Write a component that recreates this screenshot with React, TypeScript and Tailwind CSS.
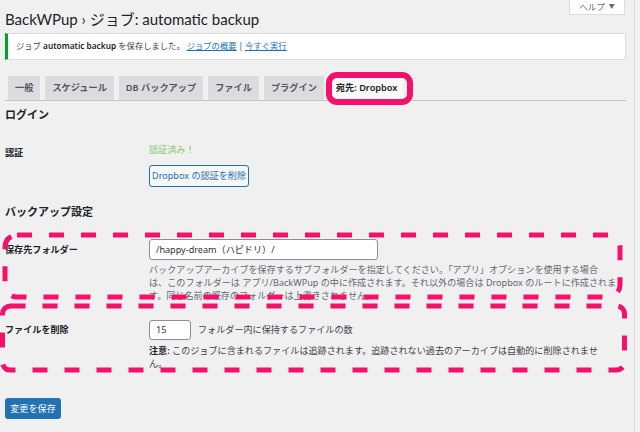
const tabs = ['一般', 'スケジュール', 'DB バックアップ', 'ファイル', 'プラグイン'];

export default function App() {
  return (
    <div className="relative w-[640px] h-[432px] overflow-hidden bg-[#f0f0f1] font-['Noto_Sans','Noto_Sans_CJK_JP',sans-serif] text-[#1d2327]">
      <div className="w-[635px] h-full border-r border-[#dcdcde] pl-[5px] pr-[8px]">
        {/* header */}
        <div className="flex items-start justify-between h-[33px]">
          <h1 className="pt-[8px] font-['Lato','Noto_Sans_CJK_JP',sans-serif] text-[15px] leading-[22px] text-[#1d2327]">BackWPup › ジョブ: automatic backup</h1>
          <div className="mr-[1px] flex h-[15px] w-[56px] items-start justify-center gap-[4px] border border-t-0 border-[#dcdcde] bg-white pt-[1px] text-[8.5px] leading-[11px] text-[#646970]">
            <span>ヘルプ</span>
            <span className="text-[6px] leading-[11px]">▼</span>
          </div>
        </div>

        {/* notice */}
        <div className="flex h-[27px] items-center border border-l-[3px] border-[#dcdcde] border-l-[#00a32a] bg-white pl-[8px] text-[8.3px] text-[#3c434a]">
          <span>
            ジョブ <b className="font-semibold text-[#1d2327]">automatic backup</b> を保存しました。
          </span>
          <span className="ml-[2px] text-[#2271b1] underline">ジョブの概要</span>
          <span className="mx-[2px]">|</span>
          <span className="text-[#2271b1] underline">今すぐ実行</span>
        </div>

        {/* tabs */}
        <div className="relative mt-[16px] flex h-[25px] items-end gap-[5px] border-b border-[#c3c4c7] pl-[3px]">
          {tabs.map((t) => (
            <div key={t} className="h-[24px] bg-[#dcdcde] px-[7px] text-[9.2px] font-semibold leading-[24px] text-[#50575e]">
              {t}
            </div>
          ))}
          <div className="-mb-[1px] ml-[1px] h-[25px] bg-[#f9f9f9] px-[6px] text-[9.2px] font-semibold leading-[24px] text-[#1d2327]">
            宛先: Dropbox
          </div>
          <div className="pointer-events-none absolute left-[321px] top-[-4px] h-[33px] w-[87px] rounded-[11px] border-[6px] border-[#f5106b]" />
        </div>

        {/* ログイン */}
        <h2 className="mt-[6px] text-[11px] font-bold leading-[16px]">ログイン</h2>
        <div className="mt-[20px] grid grid-cols-[144px_1fr]">
          <div className="pt-[3px] text-[9.1px] font-semibold leading-[14px]">認証</div>
          <div>
            <div className="text-[9.1px] leading-[14px] text-[#86c970]">認証済み！</div>
            <button className="mt-[8px] h-[22px] w-[100px] rounded-[3px] border border-[#2271b1] bg-[#f6f7f7] text-[9.1px] text-[#2271b1]">
              Dropbox の認証を削除
            </button>
          </div>
        </div>

        {/* バックアップ設定 */}
        <h2 className="mt-[17px] text-[11px] font-bold leading-[16px]">バックアップ設定</h2>
        <div className="mt-[19px] grid grid-cols-[144px_1fr]">
          <div className="pt-[4px] text-[9.1px] font-semibold leading-[14px]">保存先フォルダー</div>
          <div>
            <div className="flex h-[21px] w-[229px] items-center rounded-[3px] border border-[#8c8f94] bg-white pl-[6px] text-[9.1px] text-[#2c3338]">
              /happy-dream（ハピドリ）/
            </div>
            <p className="mt-[3px] whitespace-nowrap text-[9.1px] leading-[13px] text-[#646970]">
              バックアップアーカイブを保存するサブフォルダーを指定してください。「アプリ」オプションを使用する場合
              <br />
              は、このフォルダーは アプリ/BackWPup の中に作成されます。それ以外の場合は Dropbox のルートに作成されま
              <br />
              す。同じ名前の既存のフォルダーは上書きされません。
            </p>
          </div>
        </div>

        <div className="mt-[18px] grid grid-cols-[144px_1fr]">
          <div className="pt-[3px] text-[9.1px] font-semibold leading-[14px]">ファイルを削除</div>
          <div>
            <div className="flex items-center gap-[7px]">
              <div className="flex h-[20px] w-[42px] items-center rounded-[3px] border border-[#8c8f94] bg-white pl-[6px] text-[9.1px] text-[#2c3338]">
                15
              </div>
              <span className="text-[9.1px] text-[#3c434a]">フォルダー内に保持するファイルの数</span>
            </div>
            <p className="mt-[4px] whitespace-nowrap text-[9.1px] leading-[13px] text-[#3c434a]">
              <b className="font-semibold text-[#1d2327]">注意:</b> このジョブに含まれるファイルは追跡されます。追跡されない過去のアーカイブは自動的に削除されませ
              <br />
              ん。
            </p>
          </div>
        </div>

        <button className="mt-[28px] h-[21px] w-[56px] rounded-[3px] bg-[#2271b1] text-[9.1px] text-white">変更を保存</button>
      </div>

      {/* annotation dashes */}
      <svg className="pointer-events-none absolute left-0 top-0" width="640" height="432">
        <rect x="5" y="235" width="615" height="62" rx="12" fill="none" stroke="#f5106b" strokeWidth="5" strokeDasharray="15 17" />
        <rect x="2.5" y="306" width="622" height="64" rx="8" fill="none" stroke="#f5106b" strokeWidth="5" strokeDasharray="15 17" />
      </svg>
    </div>
  );
}
